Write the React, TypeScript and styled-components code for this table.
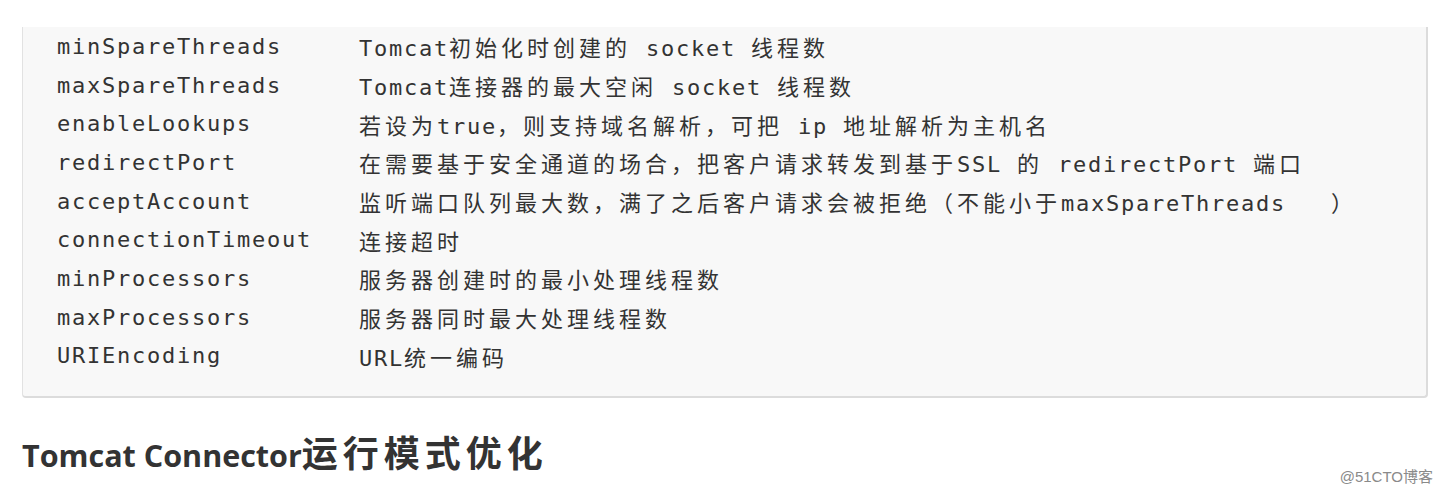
import React from 'react';
import styled, { createGlobalStyle } from 'styled-components';

const GlobalStyle = createGlobalStyle`
  html, body {
    margin: 0;
    padding: 0;
    background: #fff;
  }
`;

const Page = styled.div`
  position: relative;
  width: 1442px;
  height: 498px;
  padding: 27px 0 0 22px;
  box-sizing: border-box;
  overflow: hidden;
`;

const CodeBox = styled.div`
  width: 1406px;
  box-sizing: border-box;
  background: #f8f8f8;
  border-left: 1px solid #e2e2e2;
  border-right: 2px solid #dcdcdc;
  border-bottom: 2px solid #dcdcdc;
  border-radius: 0 0 4px 4px;
  padding: 0 0 21px 34px;
`;

const Row = styled.div`
  display: grid;
  grid-template-columns: 302px 1fr;
  height: 38.7px;
  align-items: center;
  font-family: "DejaVu Sans Mono", "Noto Sans CJK SC", monospace;
  font-size: 22px;
  letter-spacing: 1.75px;
  color: #333;
  white-space: pre;
`;

const Han = styled.span`
  font-family: "Noto Sans CJK SC", sans-serif;
  letter-spacing: 4px;
`;

const Heading = styled.h2`
  margin: 35px 0 0 0;
  font-family: "Open Sans", "Noto Sans CJK SC", sans-serif;
  font-weight: 700;
  font-size: 30.5px;
  line-height: 40px;
  color: #333;
`;

const HeadHan = styled.span`
  font-family: "Noto Sans CJK SC", sans-serif;
  font-size: 36px;
  line-height: 1;
  letter-spacing: 5px;
`;

const Watermark = styled.div`
  position: absolute;
  right: 9px;
  bottom: 12px;
  font-family: "Liberation Sans", "Noto Sans CJK SC", sans-serif;
  font-size: 15px;
  color: #8a8a8a;
`;

const HAN = /([\u3000-\u9fff\uff00-\uffef]+)/;

const Mixed = ({ text, as: Wrap = Han }: { text: string; as?: typeof Han }) => (
  <>
    {text.split(HAN).map((part, i) =>
      i % 2 === 1 ? <Wrap key={i}>{part}</Wrap> : part
    )}
  </>
);

const params: [string, string][] = [
  ['minSpareThreads', 'Tomcat初始化时创建的 socket 线程数'],
  ['maxSpareThreads', 'Tomcat连接器的最大空闲 socket 线程数'],
  ['enableLookups', '若设为true，则支持域名解析，可把 ip 地址解析为主机名'],
  ['redirectPort', '在需要基于安全通道的场合，把客户请求转发到基于SSL 的 redirectPort 端口'],
  ['acceptAccount', '监听端口队列最大数，满了之后客户请求会被拒绝（不能小于maxSpareThreads   ）'],
  ['connectionTimeout', '连接超时'],
  ['minProcessors', '服务器创建时的最小处理线程数'],
  ['maxProcessors', '服务器同时最大处理线程数'],
  ['URIEncoding', 'URL统一编码'],
];

export default function App() {
  return (
    <>
      <GlobalStyle />
      <Page>
        <CodeBox>
          {params.map(([k, d]) => (
            <Row key={k}>
              <span>{k}</span>
              <span>
                <Mixed text={d} />
              </span>
            </Row>
          ))}
        </CodeBox>
        <Heading>
          <Mixed text="Tomcat Connector运行模式优化" as={HeadHan} />
        </Heading>
        <Watermark>@51CTO博客</Watermark>
      </Page>
    </>
  );
}
